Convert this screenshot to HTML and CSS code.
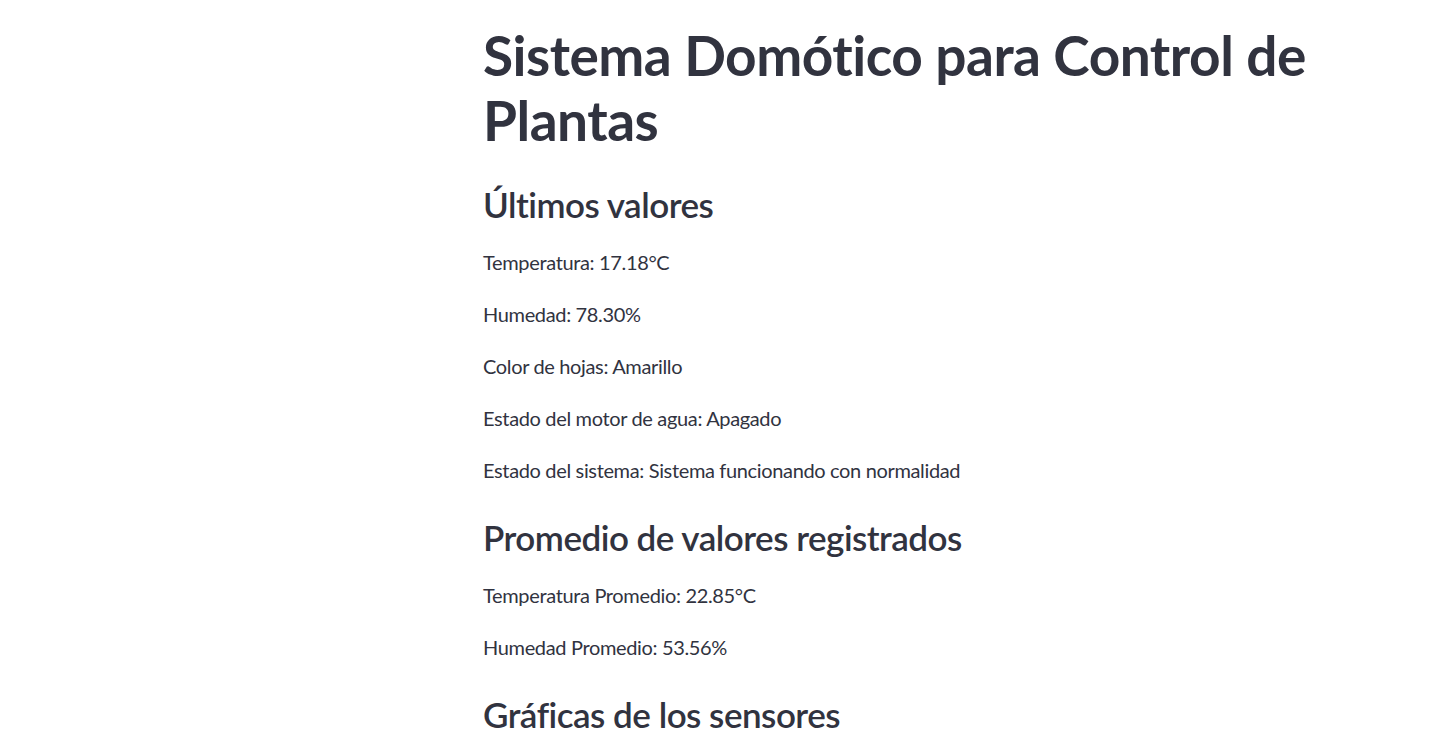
FILE: index.html
```html
<!DOCTYPE html>
<html lang="es">
<head>
<meta charset="utf-8">
<title>Sistema Domótico para Control de Plantas</title>
<link rel="stylesheet" href="styles.css">
</head>
<body>
<main class="app">
  <div class="block">
    <h1 class="title">Sistema Domótico para Control de Plantas</h1>
    <h3 class="subheader">Últimos valores</h3>
    <p class="text">Temperatura: 17.18°C</p>
    <p class="text">Humedad: 78.30%</p>
    <p class="text">Color de hojas: Amarillo</p>
    <p class="text">Estado del motor de agua: Apagado</p>
    <p class="text">Estado del sistema: Sistema funcionando con normalidad</p>
    <h3 class="subheader">Promedio de valores registrados</h3>
    <p class="text">Temperatura Promedio: 22.85°C</p>
    <p class="text">Humedad Promedio: 53.56%</p>
    <h3 class="subheader">Gráficas de los sensores</h3>
  </div>
</main>
</body>
</html>
```

FILE: styles.css
```css
html, body {
  margin: 0;
  padding: 0;
  background: #ffffff;
  height: 100%;
  overflow: hidden;
}

body {
  font-family: "Lato", "Noto Sans", sans-serif;
  color: #31333f;
}

.app {
  display: flex;
  padding: 23px 0 0 483px;
}

.block {
  display: flex;
  flex-direction: column;
  gap: 20px;
  width: 860px;
}

.title {
  margin: 0;
  font-size: 55px;
  line-height: 65px;
  font-weight: 700;
  letter-spacing: -0.5px;
}

.subheader {
  margin: 10px 0 1px;
  font-size: 35px;
  line-height: 42px;
  font-weight: 600;
  letter-spacing: -0.5px;
}

.text {
  margin: 0;
  font-size: 20px;
  line-height: 32px;
  font-weight: 400;
  letter-spacing: -0.35px;
}
```
